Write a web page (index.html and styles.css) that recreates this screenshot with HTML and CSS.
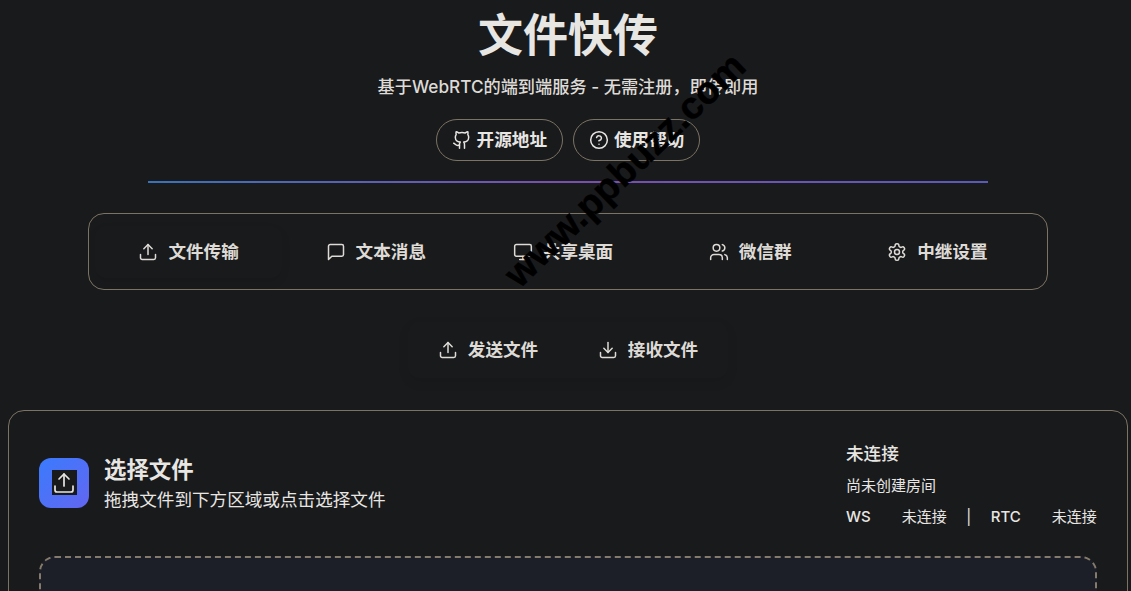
FILE: index.html
```html
<!DOCTYPE html>
<html lang="zh-CN">
<head>
    <meta charset="UTF-8">
    <meta name="viewport" content="width=device-width, initial-scale=1.0">
    <title>文件快传</title>
    <link rel="stylesheet" href="styles.css">
</head>
<body>
    <div class="page">
        <!-- 头部 -->
        <header class="hero">
            <h1 class="hero-title">文件快传</h1>
            <p class="hero-sub">基于WebRTC的端到端服务 - 无需注册，即传即用</p>
            <div class="hero-links">
                <a class="pill" href="#">
                    <svg class="icon" viewBox="0 0 24 24"><path d="M15 22v-4a4.8 4.8 0 0 0-1-3.5c3 0 6-2 6-5.500.08-1.250-.27-2.480-1-3.500.28-1.150.28-2.350 0-3.500 0 0-1 0-3 1.500-2.640-.5-5.360-.5-8 0C6 2 5 2 5 2c-.3 1.150-.3 2.350 0 3.500A5.400 5.400 0 0 0 4 9c0 3.500 3 5.500 6 5.500-.39.490-.68 1.050-.85 1.650-.17.600-.22 1.230-.15 1.850v4"/><path d="M9 18c-4.510 2-5-2-7-2"/></svg>
                    开源地址
                </a>
                <a class="pill" href="#">
                    <svg class="icon" viewBox="0 0 24 24"><circle cx="12" cy="12" r="10"/><path d="M9.090 9a3 3 0 0 1 5.830 1c0 2-3 3-3 3"/><path d="M12 17h.01"/></svg>
                    使用帮助
                </a>
            </div>
            <div class="hero-line"></div>
        </header>

        <!-- 功能标签 -->
        <nav class="tabs">
            <a class="tab active" href="#">
                <svg class="icon" viewBox="0 0 24 24"><path d="M21 15v4a2 2 0 0 1-2 2H5a2 2 0 0 1-2-2v-4"/><path d="M17 8l-5-5-5 5"/><path d="M12 3v12"/></svg>
                文件传输
            </a>
            <a class="tab" href="#">
                <svg class="icon" viewBox="0 0 24 24"><path d="M21 15a2 2 0 0 1-2 2H7l-4 4V5a2 2 0 0 1 2-2h14a2 2 0 0 1 2 2z"/></svg>
                文本消息
            </a>
            <a class="tab" href="#">
                <svg class="icon" viewBox="0 0 24 24"><rect x="2" y="3" width="20" height="14" rx="2"/><path d="M8 21h8"/><path d="M12 17v4"/></svg>
                共享桌面
            </a>
            <a class="tab" href="#">
                <svg class="icon" viewBox="0 0 24 24"><path d="M16 21v-2a4 4 0 0 0-4-4H6a4 4 0 0 0-4 4v2"/><circle cx="9" cy="7" r="4"/><path d="M22 21v-2a4 4 0 0 0-3-3.870"/><path d="M16 3.130a4 4 0 0 1 0 7.750"/></svg>
                微信群
            </a>
            <a class="tab" href="#">
                <svg class="icon" viewBox="0 0 24 24"><path d="M12.220 2h-.44a2 2 0 0 0-2 2v.18a2 2 0 0 1-1 1.730l-.43.250a2 2 0 0 1-2 0l-.15-.08a2 2 0 0 0-2.730.73l-.22.380a2 2 0 0 0 .73 2.730l.15.100a2 2 0 0 1 1 1.720v.510a2 2 0 0 1-1 1.740l-.15.090a2 2 0 0 0-.73 2.730l.22.380a2 2 0 0 0 2.730.73l.15-.08a2 2 0 0 1 2 0l.43.250a2 2 0 0 1 1 1.730V20a2 2 0 0 0 2 2h.44a2 2 0 0 0 2-2v-.18a2 2 0 0 1 1-1.730l.43-.250a2 2 0 0 1 2 0l.15.080a2 2 0 0 0 2.730-.73l.22-.390a2 2 0 0 0-.73-2.730l-.15-.080a2 2 0 0 1-1-1.740v-.500a2 2 0 0 1 1-1.740l.15-.090a2 2 0 0 0 .73-2.730l-.22-.380a2 2 0 0 0-2.730-.73l-.15.080a2 2 0 0 1-2 0l-.43-.250a2 2 0 0 1-1-1.730V4a2 2 0 0 0-2-2z"/><circle cx="12" cy="12" r="3"/></svg>
                中继设置
            </a>
        </nav>

        <!-- 发送 / 接收 -->
        <div class="modes">
            <a class="mode active" href="#">
                <svg class="icon" viewBox="0 0 24 24"><path d="M21 15v4a2 2 0 0 1-2 2H5a2 2 0 0 1-2-2v-4"/><path d="M17 8l-5-5-5 5"/><path d="M12 3v12"/></svg>
                发送文件
            </a>
            <a class="mode" href="#">
                <svg class="icon" viewBox="0 0 24 24"><path d="M21 15v4a2 2 0 0 1-2 2H5a2 2 0 0 1-2-2v-4"/><path d="M7 10l5 5 5-5"/><path d="M12 15V3"/></svg>
                接收文件
            </a>
        </div>

        <!-- 选择文件卡片 -->
        <section class="card">
            <div class="card-head">
                <div class="card-title-wrap">
                    <div class="card-logo">
                        <span class="card-logo-inner">
                            <svg class="icon" viewBox="0 0 24 24"><path d="M21 15v4a2 2 0 0 1-2 2H5a2 2 0 0 1-2-2v-4"/><path d="M17 8l-5-5-5 5"/><path d="M12 3v12"/></svg>
                        </span>
                    </div>
                    <div>
                        <h2 class="card-title">选择文件</h2>
                        <p class="card-desc">拖拽文件到下方区域或点击选择文件</p>
                    </div>
                </div>
                <div class="status">
                    <div class="status-title">未连接</div>
                    <div class="status-room">尚未创建房间</div>
                    <div class="status-row">
                        <b>WS</b><span>未连接</span><i>|</i><b>RTC</b><span>未连接</span>
                    </div>
                </div>
            </div>
            <div class="dropzone"></div>
        </section>
    </div>

    <div class="watermark">www.ppbuzz.com</div>
</body>
</html>
```

FILE: styles.css
```css
:root {
    --bg: #191a1c;
    --text: #e8e6e3;
    --border: #7d7364;
    --font: "Inter", "Noto Sans CJK SC", sans-serif;
}

body {
    margin: 0;
    height: 591px;
    overflow: hidden;
    background: var(--bg);
    color: var(--text);
    font-family: var(--font);
}

a {
    color: inherit;
    text-decoration: none;
}

.page {
    padding: 0 3px 0 8px;
}

.icon {
    width: 20px;
    height: 20px;
    flex-shrink: 0;
    fill: none;
    stroke: currentColor;
    stroke-width: 1.800;
    stroke-linecap: round;
    stroke-linejoin: round;
}

/* 头部 */
.hero {
    display: flex;
    flex-direction: column;
    align-items: center;
}

.hero-title {
    margin: 6px 0 0;
    font-size: 45px;
    line-height: 60px;
    font-weight: 700;
}

.hero-sub {
    margin: 7px 0 0;
    font-size: 17.200px;
    line-height: 28px;
    font-weight: 500;
    color: #dedbd6;
}

.hero-links {
    display: flex;
    gap: 10px;
    margin-top: 18px;
}

.pill {
    display: flex;
    align-items: center;
    gap: 5px;
    height: 40px;
    padding: 0 15px;
    border: 1px solid var(--border);
    border-radius: 21px;
    font-size: 17.600px;
    line-height: 1;
    font-weight: 600;
}

.hero-line {
    width: 840px;
    height: 2px;
    margin-top: 20px;
    background: linear-gradient(90deg, #3a72b8, #7a4fb0 50%, #5a5ab8);
}

/* 功能标签 */
.tabs {
    display: flex;
    align-items: center;
    width: 936px;
    margin: 30px auto 0;
    padding: 0 16px 0 6px;
    height: 75px;
    border: 1px solid var(--border);
    border-radius: 16px;
}

.tab {
    flex: 1;
    display: flex;
    align-items: center;
    justify-content: center;
    gap: 10px;
    height: 52px;
    font-size: 17.600px;
    line-height: 1;
    font-weight: 600;
    color: #dedbd6;
    border-radius: 12px;
}

.tab.active {
    box-shadow: 0 4px 10px rgba(0, 0, 0, 0.08);
}

/* 发送 / 接收 */
.modes {
    display: flex;
    justify-content: center;
    width: 320px;
    margin: 32px auto 0;
    border-radius: 12px;
    box-shadow: 0 4px 12px rgba(0, 0, 0, 0.08);
}

.mode {
    display: flex;
    align-items: center;
    justify-content: center;
    gap: 10px;
    width: 160px;
    height: 56px;
    font-size: 17.600px;
    line-height: 1;
    font-weight: 600;
    color: #dedbd6;
}

/* 卡片 */
.card {
    margin-top: 32px;
    padding: 31px 30px 30px;
    height: 300px;
    border: 1px solid var(--border);
    border-radius: 16px;
}

.card-head {
    display: flex;
    justify-content: space-between;
    align-items: flex-start;
}

.card-title-wrap {
    display: flex;
    align-items: center;
    gap: 15px;
    margin-top: 13px;
}

.card-logo {
    width: 50px;
    height: 50px;
    margin-bottom: 3px;
    display: flex;
    align-items: center;
    justify-content: center;
    border-radius: 12px;
    background: linear-gradient(135deg, #3a7bfd, #6366f1);
}

.card-logo-inner {
    display: flex;
    align-items: center;
    justify-content: center;
    width: 25px;
    height: 25px;
    background: #191a1c;
}

.card-logo-inner .icon {
    width: 24px;
    height: 24px;
    stroke-width: 1.700;
}

.card-title {
    margin: 0;
    font-size: 22.400px;
    line-height: 30px;
    font-weight: 700;
}

.card-desc {
    margin: 2px 0 0;
    font-size: 17.600px;
    line-height: 26px;
}

.status {
    width: 251px;
}

.status-title {
    font-size: 17.600px;
    line-height: 24px;
    font-weight: 500;
}

.status-room {
    margin-top: 10px;
    font-size: 15px;
    line-height: 20px;
}

.status-row {
    display: flex;
    gap: 19.500px;
    margin-top: 11px;
    font-size: 15px;
    line-height: 20px;
    white-space: nowrap;
}

.status-row b {
    margin-right: 11.500px;
    font-weight: 500;
}

.status-row i {
    font-style: normal;
}

.dropzone {
    height: 200px;
    margin-top: 29px;
    border: 2px dashed #857b6c;
    border-radius: 16px;
    background: #1c1f28;
}

/* 水印 */
.watermark {
    position: absolute;
    left: 625px;
    top: 170px;
    transform: translate(-50%, -50%) rotate(-44deg);
    font-family: "Liberation Sans", sans-serif;
    font-size: 38px;
    font-weight: 700;
    color: #000;
    white-space: nowrap;
    -webkit-text-stroke: 0.500px #000;
}
```
